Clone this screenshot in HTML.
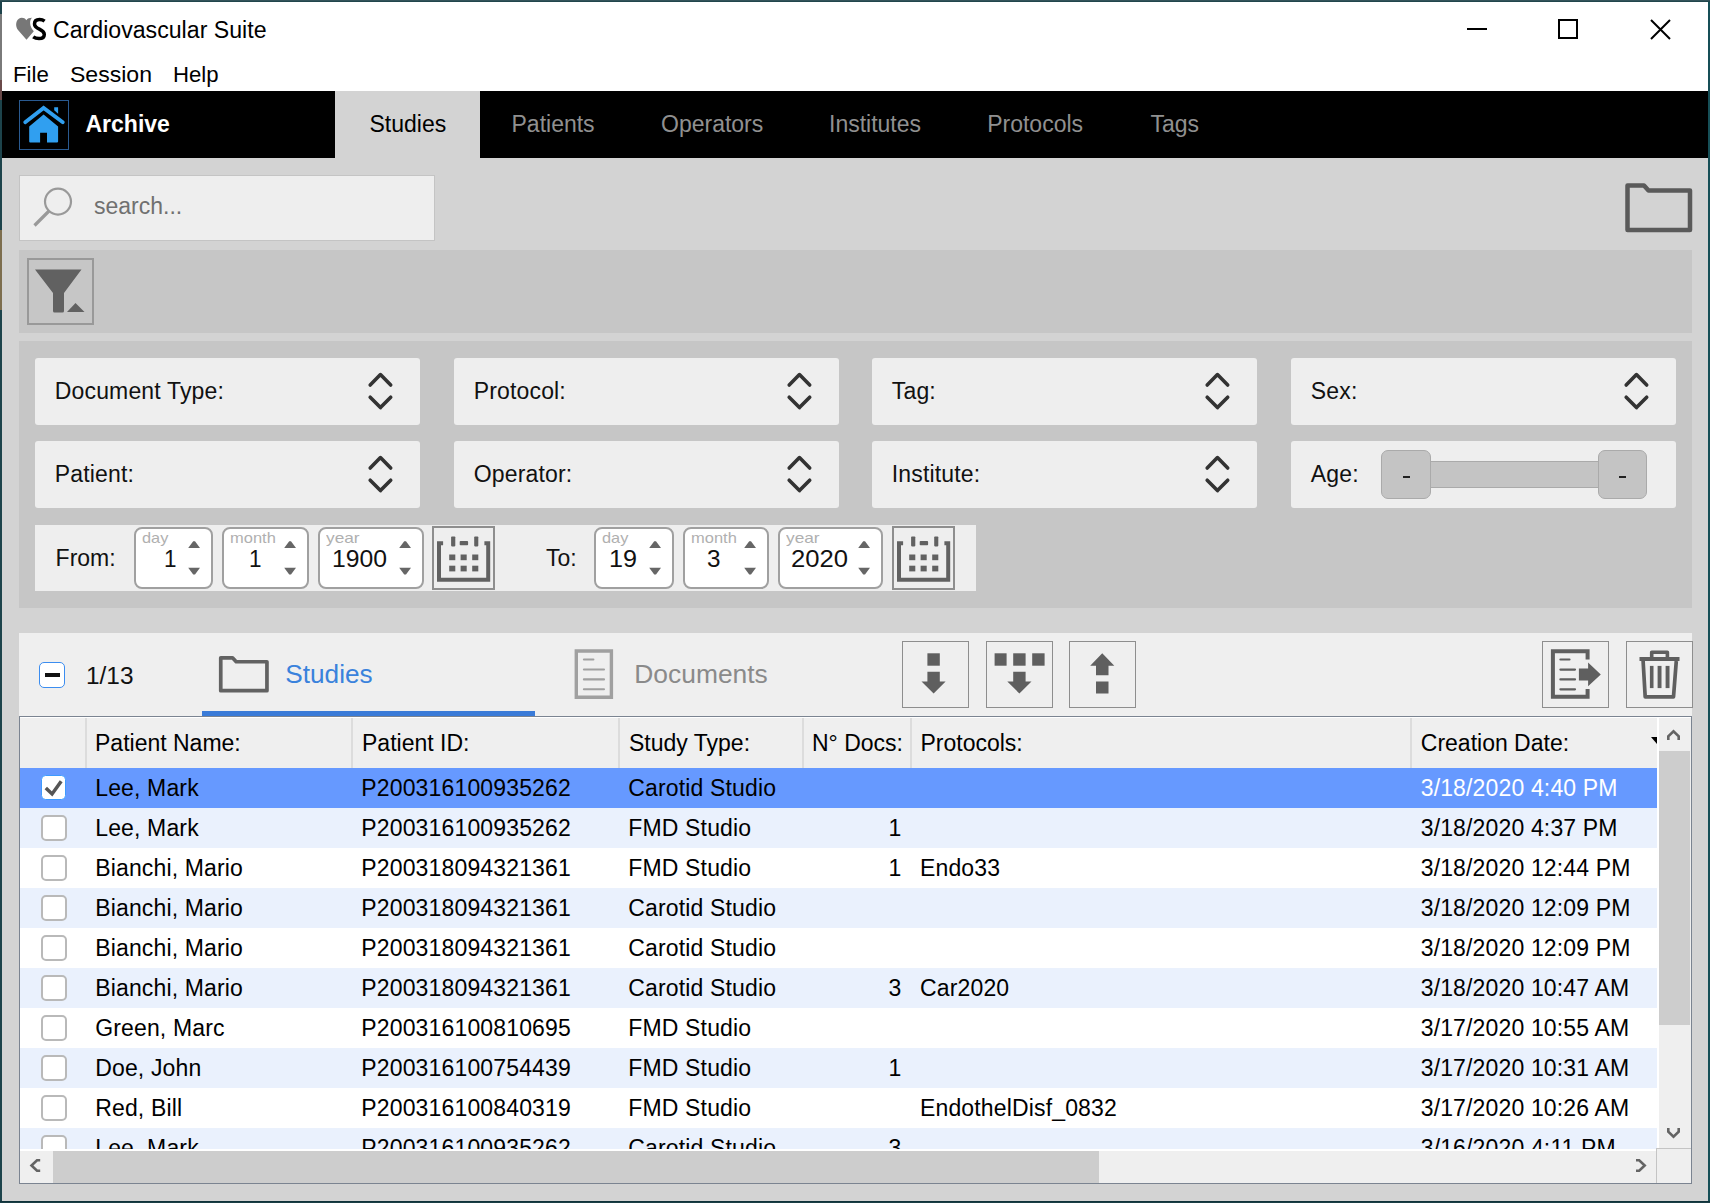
<!DOCTYPE html>
<html><head><meta charset="utf-8">
<style>
*{box-sizing:border-box;margin:0;padding:0}
html,body{width:1710px;height:1203px;overflow:hidden;background:#1d434b}
body{font-family:"Liberation Sans",sans-serif;position:relative}
.a{position:absolute}
.t{position:absolute;white-space:nowrap;line-height:1}
svg{position:absolute;overflow:visible}
</style></head><body>
<div class="a" style="left:1708px;top:0px;width:2px;height:1203px;background:#164f57"></div>
<div class="a" style="left:0px;top:1201px;width:1710px;height:1px;background:#0f323a"></div>
<div class="a" style="left:0px;top:1202px;width:1710px;height:1px;background:#1a3e45"></div>
<div class="a" style="left:0px;top:14px;width:2px;height:66px;background:#7a7a7a"></div>
<div class="a" style="left:0px;top:80px;width:2px;height:20px;background:#6a4a4a"></div>
<div class="a" style="left:0px;top:230px;width:2px;height:80px;background:#7d6e4e"></div>
<div class="a" style="left:0px;top:0px;width:1710px;height:1px;background:#33535a"></div>
<div class="a" style="left:0px;top:1px;width:1710px;height:1px;background:#21464c"></div>
<div class="a" style="left:2px;top:2px;width:1706px;height:1199px;background:#d3d3d3"></div>
<div class="a" style="left:2px;top:2px;width:1706px;height:89px;background:#fff"></div>
<svg style="left:0;top:0" width="60" height="50"><path d="M26.5 39.8 L18 30 C15.5 27 15.5 21.5 18.5 19 C21 17 24.5 17.5 26.3 20.2 C27.5 18.5 29.5 17.9 32 17.8 C29.5 20 29 26 33.8 31.2 Z" fill="#777"/><path d="M44.6 21.2 C43 20 41.3 19.6 39.5 19.6 C36.2 19.6 34.5 21.5 34.5 24 C34.5 27 37 28 39.8 29.3 C42.8 30.7 44.3 32 44.3 34.5 C44.3 37.3 42 38.6 39 38.6 C36.8 38.6 34.8 38 33.2 36.8" fill="none" stroke="#000" stroke-width="3.5"/></svg>
<div class="t" style="left:52.5px;top:18.61px;font-size:23.5px;color:#000;transform:scaleX(0.9847);transform-origin:0 0;">Cardiovascular Suite</div>
<div class="a" style="left:1467px;top:28px;width:20px;height:2px;background:#000"></div>
<div class="a" style="left:1558px;top:19px;width:20px;height:20px;border:2px solid #000"></div>
<svg style="left:1650;top:19" width="21" height="21"><path d="M1 1 L20 20 M20 1 L1 20" stroke="#000" stroke-width="2"/></svg>
<div class="t" style="left:12.7px;top:63.98px;font-size:22px;color:#000;transform:scaleX(1.0099);transform-origin:0 0;">File</div>
<div class="t" style="left:70.3px;top:63.98px;font-size:22px;color:#000;transform:scaleX(1.0477);transform-origin:0 0;">Session</div>
<div class="t" style="left:172.5px;top:63.98px;font-size:22px;color:#000;transform:scaleX(1.0079);transform-origin:0 0;">Help</div>
<div class="a" style="left:2px;top:91px;width:1706px;height:67px;background:#000"></div>
<div class="a" style="left:335px;top:91px;width:145px;height:67px;background:#d3d3d3"></div>
<div class="a" style="left:19px;top:100px;width:50px;height:50px;border:1.5px solid #2a5a90"></div>
<svg style="left:19px;top:100px" width="50" height="50"><path d="M10.2 26.6 L24.6 14.6 L39.1 26.6 L39.1 41.5 Q39.1 42.5 38 42.5 L28 42.5 L28 32.7 L21.1 32.7 L21.1 42.5 L11.2 42.5 Q10.2 42.5 10.2 41.5 Z" fill="#309ff0"/><path d="M6.2 22.2 L24.6 7.9 L43.8 22.2" fill="none" stroke="#309ff0" stroke-width="3.8" stroke-linecap="round" stroke-linejoin="miter"/><path d="M35.2 7.2 L39.1 7.2 L39.1 13.8 L35.2 10.3 Z" fill="#309ff0"/></svg>
<div class="t" style="left:85.5px;top:113.03px;font-size:23px;color:#fff;font-weight:bold;">Archive</div>
<div class="t" style="left:369.5px;top:112.83px;font-size:23px;color:#000;">Studies</div>
<div class="t" style="left:511.5px;top:112.83px;font-size:23px;color:#909090;">Patients</div>
<div class="t" style="left:661px;top:112.83px;font-size:23px;color:#909090;">Operators</div>
<div class="t" style="left:829px;top:112.83px;font-size:23px;color:#909090;">Institutes</div>
<div class="t" style="left:987.2px;top:112.83px;font-size:23px;color:#909090;">Protocols</div>
<div class="t" style="left:1150.5px;top:112.83px;font-size:23px;color:#909090;">Tags</div>
<div class="a" style="left:19px;top:175px;width:416px;height:66px;background:#eeeeee;border:1px solid #c4c4c4"></div>
<svg style="left:19px;top:175px" width="60" height="66"><circle cx="39" cy="26.6" r="13" fill="none" stroke="#999" stroke-width="2.2"/><path d="M15.5 50.5 L30 36" stroke="#999" stroke-width="3.2" stroke-linecap="butt"/></svg>
<div class="t" style="left:94px;top:195.33px;font-size:23px;color:#707070;">search...</div>
<svg style="left:1625px;top:183px" width="68" height="50"><path d="M2.5 2.5 L19 2.5 L23.5 7.5 L65 7.5 L65 47 L2.5 47 Z" fill="none" stroke="#5a5a5a" stroke-width="4.5" stroke-linejoin="round"/></svg>
<div class="a" style="left:19px;top:250px;width:1673px;height:83px;background:#c6c6c6"></div>
<div class="a" style="left:27px;top:258px;width:67px;height:67px;border:2px solid #999"></div>
<svg style="left:27px;top:258px" width="67" height="67"><path d="M8 11.5 L54.5 11.5 L37 35 L37 53 Q37 54.5 35.5 54.5 L27.5 54.5 Q26 54.5 26 53 L26 35 Z" fill="#616161"/><path d="M40 54 L48.5 45 L57.5 54 Z" fill="#616161"/></svg>
<div class="a" style="left:19px;top:341px;width:1673px;height:267px;background:#c6c6c6"></div>
<div class="a" style="left:35px;top:358px;width:385px;height:66.5px;background:#eeeeee;border-radius:3px"></div>
<div class="t" style="left:54.8px;top:379.83px;font-size:23px;color:#111;letter-spacing:0.15px;">Document Type:</div>
<svg style="left:368px;top:358px" width="30" height="60"><path d="M2.2 27 L12.45 16.6 L22.7 27 M2.2 39.2 L12.45 49.6 L22.7 39.2" fill="none" stroke="#333" stroke-width="3.6" stroke-linecap="round" stroke-linejoin="round"/></svg>
<div class="a" style="left:454px;top:358px;width:385px;height:66.5px;background:#eeeeee;border-radius:3px"></div>
<div class="t" style="left:473.8px;top:379.83px;font-size:23px;color:#111;letter-spacing:0.15px;">Protocol:</div>
<svg style="left:787px;top:358px" width="30" height="60"><path d="M2.2 27 L12.45 16.6 L22.7 27 M2.2 39.2 L12.45 49.6 L22.7 39.2" fill="none" stroke="#333" stroke-width="3.6" stroke-linecap="round" stroke-linejoin="round"/></svg>
<div class="a" style="left:872px;top:358px;width:385px;height:66.5px;background:#eeeeee;border-radius:3px"></div>
<div class="t" style="left:891.8px;top:379.83px;font-size:23px;color:#111;letter-spacing:0.15px;">Tag:</div>
<svg style="left:1205px;top:358px" width="30" height="60"><path d="M2.2 27 L12.45 16.6 L22.7 27 M2.2 39.2 L12.45 49.6 L22.7 39.2" fill="none" stroke="#333" stroke-width="3.6" stroke-linecap="round" stroke-linejoin="round"/></svg>
<div class="a" style="left:1291px;top:358px;width:385px;height:66.5px;background:#eeeeee;border-radius:3px"></div>
<div class="t" style="left:1310.8px;top:379.83px;font-size:23px;color:#111;letter-spacing:0.15px;">Sex:</div>
<svg style="left:1624px;top:358px" width="30" height="60"><path d="M2.2 27 L12.45 16.6 L22.7 27 M2.2 39.2 L12.45 49.6 L22.7 39.2" fill="none" stroke="#333" stroke-width="3.6" stroke-linecap="round" stroke-linejoin="round"/></svg>
<div class="a" style="left:35px;top:441px;width:385px;height:66.5px;background:#eeeeee;border-radius:3px"></div>
<div class="t" style="left:54.8px;top:462.83px;font-size:23px;color:#111;letter-spacing:0.15px;">Patient:</div>
<svg style="left:368px;top:441px" width="30" height="60"><path d="M2.2 27 L12.45 16.6 L22.7 27 M2.2 39.2 L12.45 49.6 L22.7 39.2" fill="none" stroke="#333" stroke-width="3.6" stroke-linecap="round" stroke-linejoin="round"/></svg>
<div class="a" style="left:454px;top:441px;width:385px;height:66.5px;background:#eeeeee;border-radius:3px"></div>
<div class="t" style="left:473.8px;top:462.83px;font-size:23px;color:#111;letter-spacing:0.15px;">Operator:</div>
<svg style="left:787px;top:441px" width="30" height="60"><path d="M2.2 27 L12.45 16.6 L22.7 27 M2.2 39.2 L12.45 49.6 L22.7 39.2" fill="none" stroke="#333" stroke-width="3.6" stroke-linecap="round" stroke-linejoin="round"/></svg>
<div class="a" style="left:872px;top:441px;width:385px;height:66.5px;background:#eeeeee;border-radius:3px"></div>
<div class="t" style="left:891.8px;top:462.83px;font-size:23px;color:#111;letter-spacing:0.15px;">Institute:</div>
<svg style="left:1205px;top:441px" width="30" height="60"><path d="M2.2 27 L12.45 16.6 L22.7 27 M2.2 39.2 L12.45 49.6 L22.7 39.2" fill="none" stroke="#333" stroke-width="3.6" stroke-linecap="round" stroke-linejoin="round"/></svg>
<div class="a" style="left:1291px;top:441px;width:385px;height:66.5px;background:#eeeeee;border-radius:3px"></div>
<div class="t" style="left:1310.8px;top:462.83px;font-size:23px;color:#111;letter-spacing:0.15px;">Age:</div>
<div class="a" style="left:1430px;top:461px;width:168px;height:27px;background:#c4c4c4;border:1px solid #aaa;border-left:none;border-right:none"></div>
<div class="a" style="left:1381px;top:450px;width:49.5px;height:49px;background:#c4c4c4;border:1px solid #aaa;border-radius:7px"></div>
<div class="a" style="left:1402.5px;top:475.5px;width:7px;height:2px;background:#222"></div>
<div class="a" style="left:1597.5px;top:450px;width:49.5px;height:49px;background:#c4c4c4;border:1px solid #aaa;border-radius:7px"></div>
<div class="a" style="left:1619.0px;top:475.5px;width:7px;height:2px;background:#222"></div>
<div class="a" style="left:35px;top:525px;width:941px;height:66px;background:#eeeeee"></div>
<div class="t" style="left:55.6px;top:546.53px;font-size:23px;color:#111;">From:</div>
<div class="t" style="left:546px;top:546.53px;font-size:23px;color:#111;">To:</div>
<div class="a" style="left:134px;top:526.5px;width:79px;height:62.5px;background:#fff;border:2px solid #a0a0a0;border-radius:8px"></div>
<div class="t" style="left:142px;top:530.73px;font-size:14.5px;color:#b0b0b0;transform:scaleX(1.1251);transform-origin:0 0;">day</div>
<div class="t" style="left:164px;top:548.11px;font-size:23.5px;color:#111;transform:scaleX(0.9565);transform-origin:0 0;">1</div>
<svg style="left:188.0px;top:540px" width="14" height="36"><path d="M0.2 8 L5.2 1.3 L7 1.3 L12 8 Z M0.2 27.8 L5.2 34.5 L7 34.5 L12 27.8 Z" fill="#666"/></svg>
<div class="a" style="left:222px;top:526.5px;width:86.5px;height:62.5px;background:#fff;border:2px solid #a0a0a0;border-radius:8px"></div>
<div class="t" style="left:230px;top:530.73px;font-size:14.5px;color:#b0b0b0;transform:scaleX(1.1366);transform-origin:0 0;">month</div>
<div class="t" style="left:249px;top:548.11px;font-size:23.5px;color:#111;transform:scaleX(0.9565);transform-origin:0 0;">1</div>
<svg style="left:283.5px;top:540px" width="14" height="36"><path d="M0.2 8 L5.2 1.3 L7 1.3 L12 8 Z M0.2 27.8 L5.2 34.5 L7 34.5 L12 27.8 Z" fill="#666"/></svg>
<div class="a" style="left:317.5px;top:526.5px;width:106px;height:62.5px;background:#fff;border:2px solid #a0a0a0;border-radius:8px"></div>
<div class="t" style="left:325.5px;top:530.73px;font-size:14.5px;color:#b0b0b0;transform:scaleX(1.1913);transform-origin:0 0;">year</div>
<div class="t" style="left:332px;top:548.11px;font-size:23.5px;color:#111;transform:scaleX(1.0522);transform-origin:0 0;">1900</div>
<svg style="left:398.5px;top:540px" width="14" height="36"><path d="M0.2 8 L5.2 1.3 L7 1.3 L12 8 Z M0.2 27.8 L5.2 34.5 L7 34.5 L12 27.8 Z" fill="#666"/></svg>
<div class="a" style="left:432px;top:526px;width:63px;height:64px;border:2px solid #8e8e8e"></div>
<svg style="left:432px;top:526.5px" width="63" height="63"><path d="M11.1 16.15 H7 V52.7 H56.2 V16.15 H52.4" fill="none" stroke="#616161" stroke-width="4"/><g fill="#616161"><rect x="19.1" y="9.4" width="4.2" height="10" rx="0.8"/><rect x="42.2" y="9.4" width="4.1" height="10" rx="0.8"/><rect x="27.7" y="14.1" width="8.4" height="4.1" rx="0.8"/><rect x="17.2" y="27.5" width="6.1" height="5.7"/><rect x="28.6" y="27.5" width="6.1" height="5.7"/><rect x="40.2" y="27.5" width="6.1" height="5.7"/><rect x="17.2" y="38.7" width="6.1" height="5.7"/><rect x="28.6" y="38.7" width="6.1" height="5.7"/><rect x="40.2" y="38.7" width="6.1" height="5.7"/></g></svg>
<div class="a" style="left:594px;top:526.5px;width:79.5px;height:62.5px;background:#fff;border:2px solid #a0a0a0;border-radius:8px"></div>
<div class="t" style="left:602px;top:530.73px;font-size:14.5px;color:#b0b0b0;transform:scaleX(1.1251);transform-origin:0 0;">day</div>
<div class="t" style="left:609px;top:548.11px;font-size:23.5px;color:#111;transform:scaleX(1.0713);transform-origin:0 0;">19</div>
<svg style="left:648.5px;top:540px" width="14" height="36"><path d="M0.2 8 L5.2 1.3 L7 1.3 L12 8 Z M0.2 27.8 L5.2 34.5 L7 34.5 L12 27.8 Z" fill="#666"/></svg>
<div class="a" style="left:682.5px;top:526.5px;width:86px;height:62.5px;background:#fff;border:2px solid #a0a0a0;border-radius:8px"></div>
<div class="t" style="left:690.5px;top:530.73px;font-size:14.5px;color:#b0b0b0;transform:scaleX(1.1366);transform-origin:0 0;">month</div>
<div class="t" style="left:706.5px;top:548.11px;font-size:23.5px;color:#111;transform:scaleX(1.0330);transform-origin:0 0;">3</div>
<svg style="left:743.5px;top:540px" width="14" height="36"><path d="M0.2 8 L5.2 1.3 L7 1.3 L12 8 Z M0.2 27.8 L5.2 34.5 L7 34.5 L12 27.8 Z" fill="#666"/></svg>
<div class="a" style="left:777.5px;top:526.5px;width:105.5px;height:62.5px;background:#fff;border:2px solid #a0a0a0;border-radius:8px"></div>
<div class="t" style="left:785.5px;top:530.73px;font-size:14.5px;color:#b0b0b0;transform:scaleX(1.1913);transform-origin:0 0;">year</div>
<div class="t" style="left:790.5px;top:548.11px;font-size:23.5px;color:#111;transform:scaleX(1.0904);transform-origin:0 0;">2020</div>
<svg style="left:858.0px;top:540px" width="14" height="36"><path d="M0.2 8 L5.2 1.3 L7 1.3 L12 8 Z M0.2 27.8 L5.2 34.5 L7 34.5 L12 27.8 Z" fill="#666"/></svg>
<div class="a" style="left:892px;top:526px;width:63px;height:64px;border:2px solid #8e8e8e"></div>
<svg style="left:892px;top:526.5px" width="63" height="63"><path d="M11.1 16.15 H7 V52.7 H56.2 V16.15 H52.4" fill="none" stroke="#616161" stroke-width="4"/><g fill="#616161"><rect x="19.1" y="9.4" width="4.2" height="10" rx="0.8"/><rect x="42.2" y="9.4" width="4.1" height="10" rx="0.8"/><rect x="27.7" y="14.1" width="8.4" height="4.1" rx="0.8"/><rect x="17.2" y="27.5" width="6.1" height="5.7"/><rect x="28.6" y="27.5" width="6.1" height="5.7"/><rect x="40.2" y="27.5" width="6.1" height="5.7"/><rect x="17.2" y="38.7" width="6.1" height="5.7"/><rect x="28.6" y="38.7" width="6.1" height="5.7"/><rect x="40.2" y="38.7" width="6.1" height="5.7"/></g></svg>
<div class="a" style="left:19px;top:633px;width:1673px;height:551px;background:#efefef"></div>
<div class="a" style="left:39px;top:661.5px;width:26px;height:26px;background:#fff;border:1.8px solid #3b8df0;border-radius:5px"></div>
<div class="a" style="left:44.5px;top:673px;width:15px;height:3.5px;background:#111"></div>
<div class="t" style="left:86px;top:664.53px;font-size:23px;color:#111;transform:scaleX(1.0612);transform-origin:0 0;">1/13</div>
<svg style="left:218px;top:656px" width="52" height="38"><path d="M2.75 1.85 L14.5 1.85 L18.2 5.75 L48.95 5.75 L48.95 34.65 L2.75 34.65 Z" fill="none" stroke="#626262" stroke-width="3.7" stroke-linejoin="round"/></svg>
<div class="t" style="left:285.3px;top:661.02px;font-size:26.2px;color:#3a82dc;">Studies</div>
<div class="a" style="left:202px;top:711px;width:333px;height:5px;background:#3a7bd8"></div>
<svg style="left:574px;top:649px" width="40" height="50"><path d="M2.3 2 H37.4 V48.3 H2.3 Z" fill="none" stroke="#a0a0a0" stroke-width="3.4"/><path d="M9.9 10.5 H19.4 M9.9 20.5 H30 M9.9 30.4 H30 M9.9 40.2 H30" stroke="#a0a0a0" stroke-width="2.1" stroke-linecap="round"/></svg>
<div class="t" style="left:634.3px;top:660.85px;font-size:26.4px;color:#8a8a8a;">Documents</div>
<div class="a" style="left:902px;top:641px;width:67px;height:67px;border:1.8px solid #8e8e8e"></div>
<svg style="left:902px;top:641px" width="67" height="67"><g fill="#5f5f5f"><rect x="25.4" y="12.3" width="12.4" height="12.4"/><path d="M25.4 30.8 H37.8 V40.5 H43.6 L31.6 52.5 L19.5 40.5 H25.4 Z"/></g></svg>
<div class="a" style="left:985.5px;top:641px;width:67px;height:67px;border:1.8px solid #8e8e8e"></div>
<svg style="left:985.5px;top:641px" width="67" height="67"><g fill="#5f5f5f"><rect x="8.6" y="12.3" width="12" height="12.4"/><rect x="27.2" y="12.3" width="12.4" height="12.4"/><rect x="46.2" y="12.3" width="12.4" height="12.4"/><path d="M27.2 30.8 H39.6 V40.5 H45.5 L33.4 52.5 L21.3 40.5 H27.2 Z"/></g></svg>
<div class="a" style="left:1069px;top:641px;width:67px;height:67px;border:1.8px solid #8e8e8e"></div>
<svg style="left:1069px;top:641px" width="67" height="67"><g fill="#5f5f5f"><rect x="27" y="40.5" width="12.5" height="12"/><path d="M27 34.2 H39.5 V24.7 H45.3 L33.25 12.3 L21.2 24.7 H27 Z"/></g></svg>
<div class="a" style="left:1542px;top:641px;width:67px;height:67px;border:1.8px solid #8e8e8e"></div>
<svg style="left:1542px;top:641px" width="67" height="67"><g><path d="M45.6 18.6 V10.2 H10.9 V55.8 H45.6 V48.1" fill="none" stroke="#5f5f5f" stroke-width="4"/><path d="M18.4 18.5 H27.5 M18.4 28.6 H33 M18.4 38.4 H33 M18.4 48.3 H33" stroke="#5f5f5f" stroke-width="2.2" stroke-linecap="round"/><path d="M36.9 27.6 H46.1 V21.5 L58.8 33.4 L46.1 45.2 V39.6 H36.9 Z" fill="#5f5f5f"/></g></svg>
<div class="a" style="left:1625.5px;top:641px;width:67px;height:67px;border:1.8px solid #8e8e8e"></div>
<svg style="left:1625.5px;top:641px" width="67" height="67"><g fill="#5f5f5f"><rect x="13.5" y="16" width="40" height="4"/><path d="M25.7 16 V11.3 H41.4 V16" fill="none" stroke="#5f5f5f" stroke-width="3.6" stroke-linejoin="round"/><path d="M17.1 20 L19.2 55.9 H47.5 L50.3 20" fill="none" stroke="#5f5f5f" stroke-width="3.7" stroke-linejoin="round"/><rect x="23.9" y="24.9" width="3.6" height="22.2"/><rect x="31.6" y="24.9" width="3.9" height="22.2"/><rect x="39.6" y="24.9" width="3.9" height="22.2"/></g></svg>
<div class="a" style="left:19px;top:716px;width:1673px;height:468px;background:#fff;border:1px solid #7b8491"></div>
<div class="a" style="left:20px;top:718px;width:1637px;height:50px;background:#efefef"></div>
<div class="t" style="left:95px;top:731.83px;font-size:23px;color:#000;">Patient Name:</div>
<div class="t" style="left:362px;top:731.83px;font-size:23px;color:#000;">Patient ID:</div>
<div class="t" style="left:629px;top:731.83px;font-size:23px;color:#000;">Study Type:</div>
<div class="t" style="left:812px;top:731.83px;font-size:23px;color:#000;">N° Docs:</div>
<div class="t" style="left:920.5px;top:731.83px;font-size:23px;color:#000;">Protocols:</div>
<div class="t" style="left:1420.8px;top:731.83px;font-size:23px;color:#000;">Creation Date:</div>
<div class="a" style="left:85px;top:718px;width:2px;height:50px;background:#dcdcdc"></div>
<div class="a" style="left:351px;top:718px;width:2px;height:50px;background:#dcdcdc"></div>
<div class="a" style="left:618px;top:718px;width:2px;height:50px;background:#dcdcdc"></div>
<div class="a" style="left:802px;top:718px;width:2px;height:50px;background:#dcdcdc"></div>
<div class="a" style="left:910px;top:718px;width:2px;height:50px;background:#dcdcdc"></div>
<div class="a" style="left:1410px;top:718px;width:2px;height:50px;background:#dcdcdc"></div>
<div class="a" style="left:1645px;top:730px;width:12px;height:20px;overflow:hidden"><svg style="left:6px;top:7px" width="14" height="10"><path d="M0 0 L14 0 L7 8.3 Z" fill="#000"/></svg></div>
<div class="a" style="left:20px;top:768px;width:1637px;height:381px;overflow:hidden">
<div class="a" style="left:0;top:0px;width:1637px;height:40px;background:#6699ff">
<div class="a" style="left:21.3px;top:7.3px;width:24.6px;height:24.6px;background:#fff;border:1.2px solid #3d9bff;border-radius:4.5px"></div>
<svg style="left:0;top:0" width="60" height="40"><path d="M25.8 19.9 L32.1 25.9 L41.2 13.2" fill="none" stroke="#555" stroke-width="3.5" stroke-linejoin="miter"/></svg>
<div class="t" style="left:75.20px;top:8.83px;font-size:23px;letter-spacing:0.15px;color:#000">Lee, Mark</div>
<div class="t" style="left:341.30px;top:8.83px;font-size:23px;letter-spacing:0.15px;color:#000">P200316100935262</div>
<div class="t" style="left:608.30px;top:8.83px;font-size:23px;letter-spacing:0.15px;color:#000">Carotid Studio</div>
<div class="t" style="left:1400.70px;top:8.83px;font-size:23px;letter-spacing:0.15px;color:#fff">3/18/2020 4:40 PM</div>
</div>
<div class="a" style="left:0;top:40px;width:1637px;height:40px;background:#eaf1fd">
<div class="a" style="left:20.6px;top:6.5px;width:26px;height:26px;background:#fff;border:2.2px solid #b9b9b9;border-radius:5px"></div>
<div class="t" style="left:75.20px;top:8.83px;font-size:23px;letter-spacing:0.15px;color:#000">Lee, Mark</div>
<div class="t" style="left:341.30px;top:8.83px;font-size:23px;letter-spacing:0.15px;color:#000">P200316100935262</div>
<div class="t" style="left:608.30px;top:8.83px;font-size:23px;letter-spacing:0.15px;color:#000">FMD Studio</div>
<div class="t" style="left:868.51px;top:8.83px;font-size:23px;letter-spacing:0.15px;color:#000">1</div>
<div class="t" style="left:1400.70px;top:8.83px;font-size:23px;letter-spacing:0.15px;color:#000">3/18/2020 4:37 PM</div>
</div>
<div class="a" style="left:0;top:80px;width:1637px;height:40px;background:#ffffff">
<div class="a" style="left:20.6px;top:6.5px;width:26px;height:26px;background:#fff;border:2.2px solid #b9b9b9;border-radius:5px"></div>
<div class="t" style="left:75.20px;top:8.83px;font-size:23px;letter-spacing:0.15px;color:#000">Bianchi, Mario</div>
<div class="t" style="left:341.30px;top:8.83px;font-size:23px;letter-spacing:0.15px;color:#000">P200318094321361</div>
<div class="t" style="left:608.30px;top:8.83px;font-size:23px;letter-spacing:0.15px;color:#000">FMD Studio</div>
<div class="t" style="left:868.51px;top:8.83px;font-size:23px;letter-spacing:0.15px;color:#000">1</div>
<div class="t" style="left:900.00px;top:8.83px;font-size:23px;letter-spacing:0.15px;color:#000">Endo33</div>
<div class="t" style="left:1400.70px;top:8.83px;font-size:23px;letter-spacing:0.15px;color:#000">3/18/2020 12:44 PM</div>
</div>
<div class="a" style="left:0;top:120px;width:1637px;height:40px;background:#eaf1fd">
<div class="a" style="left:20.6px;top:6.5px;width:26px;height:26px;background:#fff;border:2.2px solid #b9b9b9;border-radius:5px"></div>
<div class="t" style="left:75.20px;top:8.83px;font-size:23px;letter-spacing:0.15px;color:#000">Bianchi, Mario</div>
<div class="t" style="left:341.30px;top:8.83px;font-size:23px;letter-spacing:0.15px;color:#000">P200318094321361</div>
<div class="t" style="left:608.30px;top:8.83px;font-size:23px;letter-spacing:0.15px;color:#000">Carotid Studio</div>
<div class="t" style="left:1400.70px;top:8.83px;font-size:23px;letter-spacing:0.15px;color:#000">3/18/2020 12:09 PM</div>
</div>
<div class="a" style="left:0;top:160px;width:1637px;height:40px;background:#ffffff">
<div class="a" style="left:20.6px;top:6.5px;width:26px;height:26px;background:#fff;border:2.2px solid #b9b9b9;border-radius:5px"></div>
<div class="t" style="left:75.20px;top:8.83px;font-size:23px;letter-spacing:0.15px;color:#000">Bianchi, Mario</div>
<div class="t" style="left:341.30px;top:8.83px;font-size:23px;letter-spacing:0.15px;color:#000">P200318094321361</div>
<div class="t" style="left:608.30px;top:8.83px;font-size:23px;letter-spacing:0.15px;color:#000">Carotid Studio</div>
<div class="t" style="left:1400.70px;top:8.83px;font-size:23px;letter-spacing:0.15px;color:#000">3/18/2020 12:09 PM</div>
</div>
<div class="a" style="left:0;top:200px;width:1637px;height:40px;background:#eaf1fd">
<div class="a" style="left:20.6px;top:6.5px;width:26px;height:26px;background:#fff;border:2.2px solid #b9b9b9;border-radius:5px"></div>
<div class="t" style="left:75.20px;top:8.83px;font-size:23px;letter-spacing:0.15px;color:#000">Bianchi, Mario</div>
<div class="t" style="left:341.30px;top:8.83px;font-size:23px;letter-spacing:0.15px;color:#000">P200318094321361</div>
<div class="t" style="left:608.30px;top:8.83px;font-size:23px;letter-spacing:0.15px;color:#000">Carotid Studio</div>
<div class="t" style="left:868.51px;top:8.83px;font-size:23px;letter-spacing:0.15px;color:#000">3</div>
<div class="t" style="left:900.00px;top:8.83px;font-size:23px;letter-spacing:0.15px;color:#000">Car2020</div>
<div class="t" style="left:1400.70px;top:8.83px;font-size:23px;letter-spacing:0.15px;color:#000">3/18/2020 10:47 AM</div>
</div>
<div class="a" style="left:0;top:240px;width:1637px;height:40px;background:#ffffff">
<div class="a" style="left:20.6px;top:6.5px;width:26px;height:26px;background:#fff;border:2.2px solid #b9b9b9;border-radius:5px"></div>
<div class="t" style="left:75.20px;top:8.83px;font-size:23px;letter-spacing:0.15px;color:#000">Green, Marc</div>
<div class="t" style="left:341.30px;top:8.83px;font-size:23px;letter-spacing:0.15px;color:#000">P200316100810695</div>
<div class="t" style="left:608.30px;top:8.83px;font-size:23px;letter-spacing:0.15px;color:#000">FMD Studio</div>
<div class="t" style="left:1400.70px;top:8.83px;font-size:23px;letter-spacing:0.15px;color:#000">3/17/2020 10:55 AM</div>
</div>
<div class="a" style="left:0;top:280px;width:1637px;height:40px;background:#eaf1fd">
<div class="a" style="left:20.6px;top:6.5px;width:26px;height:26px;background:#fff;border:2.2px solid #b9b9b9;border-radius:5px"></div>
<div class="t" style="left:75.20px;top:8.83px;font-size:23px;letter-spacing:0.15px;color:#000">Doe, John</div>
<div class="t" style="left:341.30px;top:8.83px;font-size:23px;letter-spacing:0.15px;color:#000">P200316100754439</div>
<div class="t" style="left:608.30px;top:8.83px;font-size:23px;letter-spacing:0.15px;color:#000">FMD Studio</div>
<div class="t" style="left:868.51px;top:8.83px;font-size:23px;letter-spacing:0.15px;color:#000">1</div>
<div class="t" style="left:1400.70px;top:8.83px;font-size:23px;letter-spacing:0.15px;color:#000">3/17/2020 10:31 AM</div>
</div>
<div class="a" style="left:0;top:320px;width:1637px;height:40px;background:#ffffff">
<div class="a" style="left:20.6px;top:6.5px;width:26px;height:26px;background:#fff;border:2.2px solid #b9b9b9;border-radius:5px"></div>
<div class="t" style="left:75.20px;top:8.83px;font-size:23px;letter-spacing:0.15px;color:#000">Red, Bill</div>
<div class="t" style="left:341.30px;top:8.83px;font-size:23px;letter-spacing:0.15px;color:#000">P200316100840319</div>
<div class="t" style="left:608.30px;top:8.83px;font-size:23px;letter-spacing:0.15px;color:#000">FMD Studio</div>
<div class="t" style="left:900.00px;top:8.83px;font-size:23px;letter-spacing:0.15px;color:#000">EndothelDisf_0832</div>
<div class="t" style="left:1400.70px;top:8.83px;font-size:23px;letter-spacing:0.15px;color:#000">3/17/2020 10:26 AM</div>
</div>
<div class="a" style="left:0;top:360px;width:1637px;height:40px;background:#eaf1fd">
<div class="a" style="left:20.6px;top:6.5px;width:26px;height:26px;background:#fff;border:2.2px solid #b9b9b9;border-radius:5px"></div>
<div class="t" style="left:75.20px;top:8.83px;font-size:23px;letter-spacing:0.15px;color:#000">Lee, Mark</div>
<div class="t" style="left:341.30px;top:8.83px;font-size:23px;letter-spacing:0.15px;color:#000">P200316100935262</div>
<div class="t" style="left:608.30px;top:8.83px;font-size:23px;letter-spacing:0.15px;color:#000">Carotid Studio</div>
<div class="t" style="left:868.51px;top:8.83px;font-size:23px;letter-spacing:0.15px;color:#000">3</div>
<div class="t" style="left:1400.70px;top:8.83px;font-size:23px;letter-spacing:0.15px;color:#000">3/16/2020 4:11 PM</div>
</div>
</div>
<div class="a" style="left:1659px;top:718px;width:31.5px;height:430.5px;background:#efefef"></div>
<div class="a" style="left:1659px;top:751.3px;width:31px;height:274px;background:#cdcdcd"></div>
<div class="a" style="left:20px;top:1151px;width:1636.5px;height:32px;background:#efefef"></div>
<div class="a" style="left:53px;top:1151px;width:1046px;height:31.5px;background:#cdcdcd"></div>
<div class="a" style="left:1656px;top:1148px;width:35px;height:35px;background:#efefef;border-left:1px solid #c4c4c4;border-top:1px solid #c4c4c4"></div>
<svg style="left:0;top:0" width="1710" height="1203"><g fill="none" stroke="#646464" stroke-width="2.6" stroke-linejoin="miter"><path d="M1668.3 740 L1668.3 736.3 L1673.5 731.3 L1678.7 736.3 L1678.7 740"/><path d="M1668.3 1128 L1668.3 1131.7 L1673.5 1136.7 L1678.7 1131.7 L1678.7 1128"/><path d="M40.2 1160.3 L37 1160.3 L31.5 1165.5 L37 1170.7 L40.2 1170.7"/><path d="M1636 1160.3 L1639.2 1160.3 L1644.7 1165.5 L1639.2 1170.7 L1636 1170.7"/></g></svg>
</body></html>
